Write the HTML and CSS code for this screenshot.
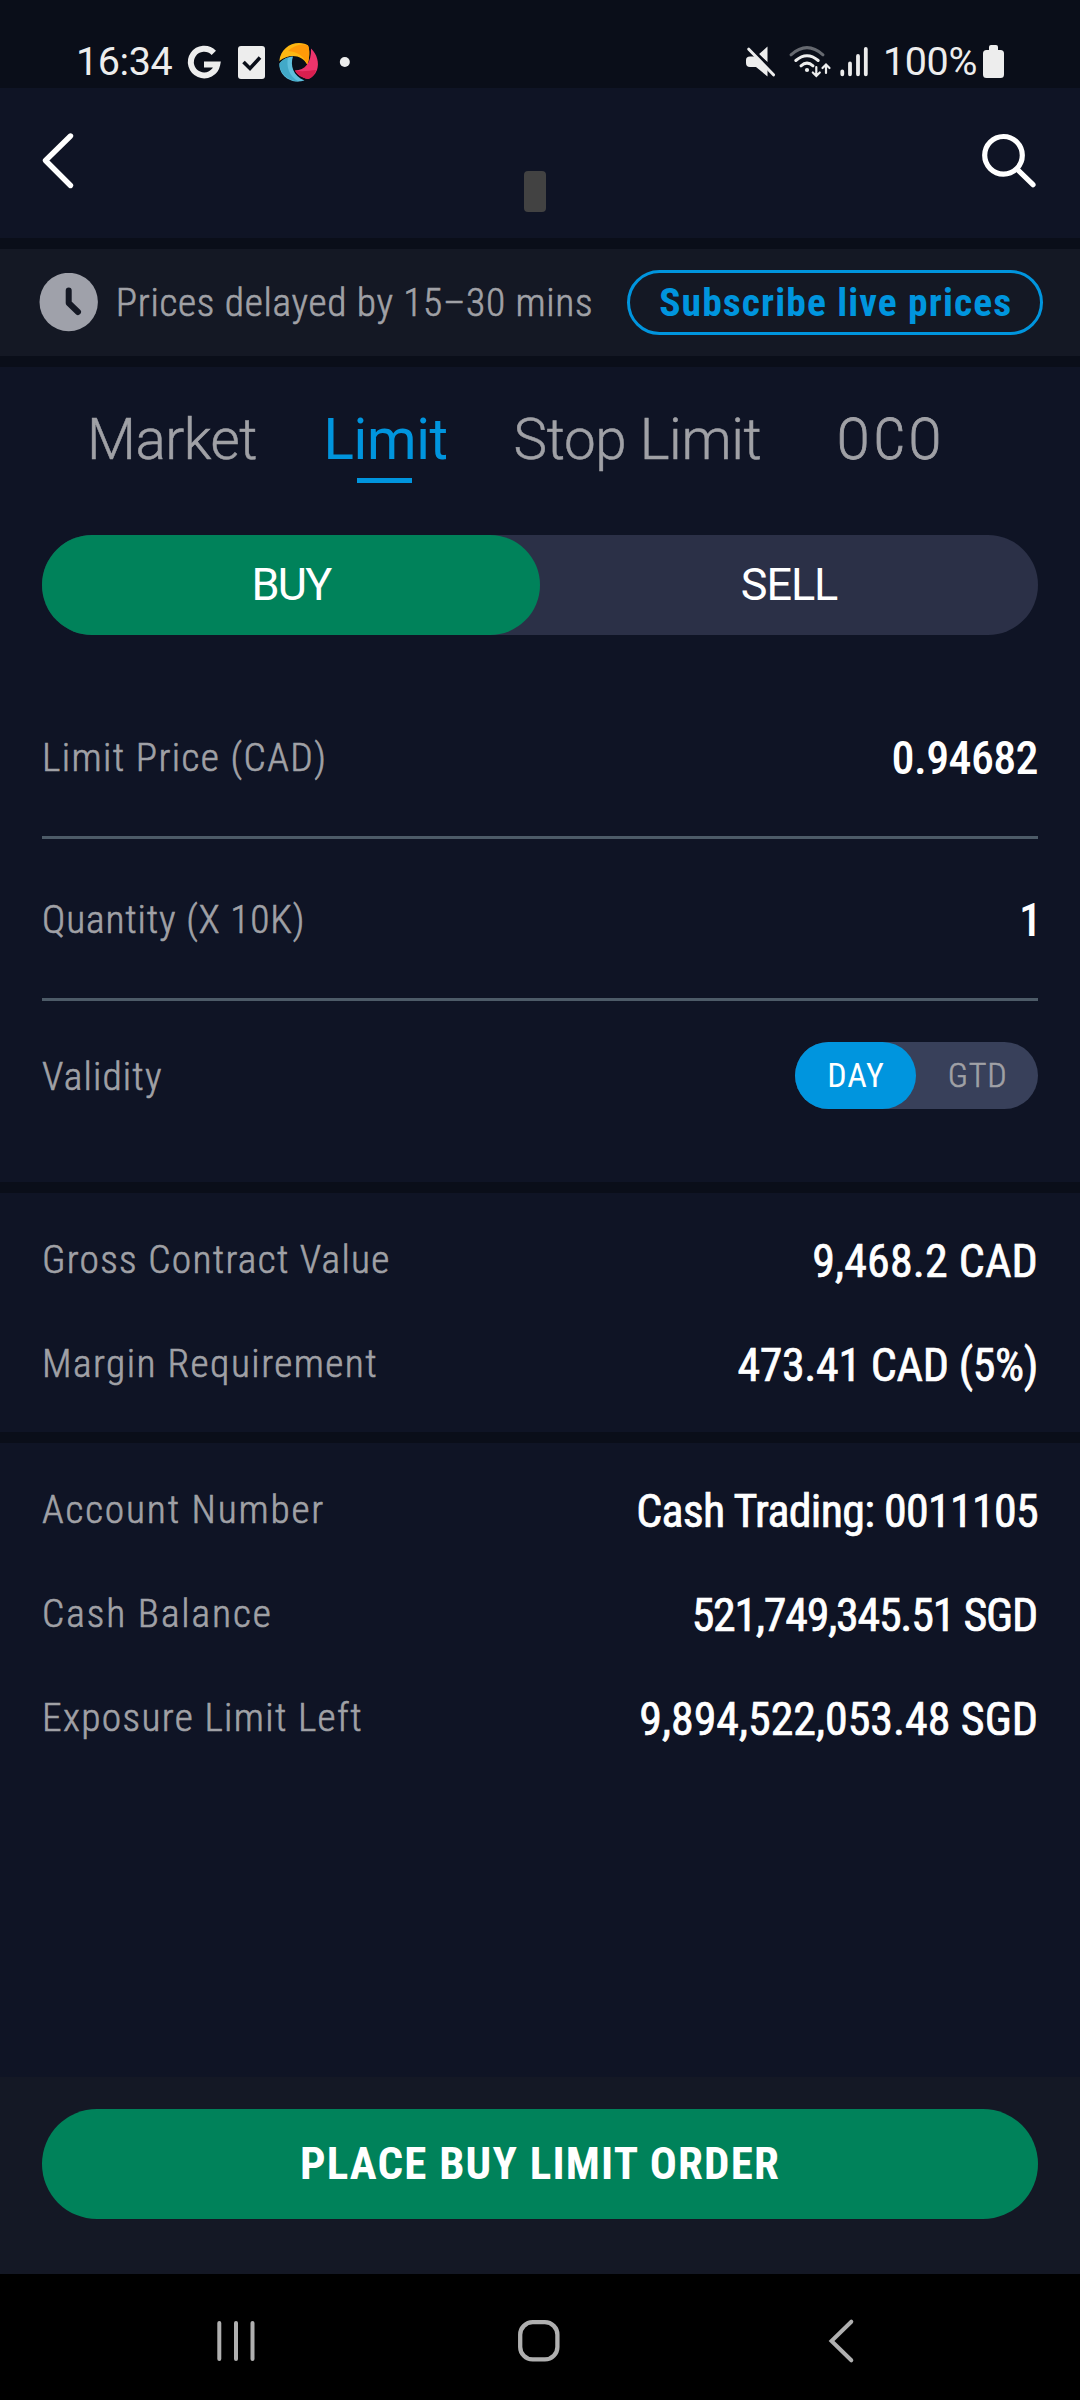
FILE: index.html
```html
<!DOCTYPE html>
<html lang="en">
<head>
<meta charset="utf-8">
<title>Place order</title>
<link rel="stylesheet" href="styles.css">
</head>
<body>
<div class="screen">
  <div class="status">
    <div class="status-left">
      <span class="time">16:34</span>
      <svg class="ic-g" viewBox="186 0 36 88"><path d="M213.8 52.9A13.3 13.3 0 1 0 217.2 64.6H204" fill="none" stroke="#ededed" stroke-width="6"/></svg>
      <svg class="ic-task" viewBox="236 0 32 88"><rect x="238" y="46" width="27" height="33" rx="3" fill="#ededed"/><path d="M243.5 62l6.5 6.5 10-11" fill="none" stroke="#0a0e19" stroke-width="3.6"/></svg>
      <svg class="ic-swirl" viewBox="277 0 44 88">
        <path d="M279.3 61C280.5 50 289 43 299 43C303 43 306.5 44 308 45.5C310 50 309.5 58 307.5 65C302 55 290 53 279.3 61Z" fill="#fdb813"/>
        <path d="M308 45.5C310 50 309.500 58 307.500 65C304 56 298 52 288 51C294 45 302 43 308 45.500Z" fill="#ff9a08"/>
        <path d="M293 56.500C290 65 293 76 304.500 80.500C291 85 278.500 75 279.500 63.500C282 60 287 57 293 56.500Z" fill="#5fbfdc"/>
        <path d="M288 57.500C286 66 289 77 299 81.500C287 81 279 72 279.500 63.500C282 60 285 58.500 288 57.500Z" fill="#42a9c8"/>
        <path d="M311 48.500C317 54 319.500 63 317 70C315 75 311.500 78 308 79C302 77.500 297 75 295 70.500C305 70 311.500 63 311 48.500Z" fill="#ee346c"/>
        <path d="M316 70C314.500 75 311.500 78 308 79C302 77.500 297 75 295 70.500C303 72 310 70.500 316 70Z" fill="#d91f4f"/>
      </svg>
      <svg class="ic-dot" viewBox="339 0 12 88"><circle cx="344.8" cy="62" r="5" fill="#ededed"/></svg>
    </div>
    <div class="status-right">
      <svg class="ic-mute" viewBox="744 0 34 88"><path d="M767.500 46.500V62L758.800 54.300ZM750 56.500H754.500L767.500 69.500V76.500L756 67H750Q746 67 746 63V60Q746 56.500 750 56.500Z" fill="#ededed"/><path d="M755 51.500L775 72" stroke="#0a0e19" stroke-width="2.500"/><path d="M748.800 49.200L773.500 74.800" stroke="#ededed" stroke-width="3" stroke-linecap="round"/></svg>
      <svg class="ic-wifi" viewBox="788 0 44 88" fill="none" stroke="#ededed" stroke-width="3" stroke-linecap="round"><path d="M791 54.800Q807 40.500 823 54.800" stroke="#666970"/><path d="M795.800 60.500Q807 51 818.200 60.500M801 65.800Q807 60.500 813 65.800"/><circle cx="807" cy="70" r="2.100" fill="#ededed" stroke="none"/><path d="M816.300 67V75.500M812.800 72.500L816.300 76L819.800 72.500M826 73V64.800M822.500 68L826 64.500L829.500 68" stroke-width="2.200"/></svg>
      <svg class="ic-signal" viewBox="838 0 32 88" stroke="#ededed" stroke-width="3.800" stroke-linecap="round"><path d="M842.300 71.500V74.300M850 63.500V74.300M858 56V74.300M865.800 49V74.300"/></svg>
      <span class="batt">100%</span>
      <svg class="ic-batt" viewBox="982 0 24 88"><path d="M989 50V47Q989 45 991 45H996Q998 45 998 47V50H1000.500Q1004 50 1004 53.500V74.500Q1004 78 1000.500 78H986.500Q983 78 983 74.500V53.500Q983 50 986.500 50Z" fill="#ededed"/></svg>
    </div>
  </div>

  <header class="header">
    <svg class="back" viewBox="40 88 36 150"><path d="M70.500 136L45.500 160.500L70.500 185.500" fill="none" stroke="#fff" stroke-width="5.400" stroke-linecap="round" stroke-linejoin="round"/></svg>
    <span class="title-chip"></span>
    <svg class="search" viewBox="980 88 60 150" fill="none" stroke="#fff" stroke-width="5.200" stroke-linecap="round"><circle cx="1003.500" cy="155.300" r="18.800"/><path d="M1017.500 169.500L1033 184.700"/></svg>
  </header>

  <section class="notice">
    <svg class="clock" viewBox="0 0 60 60"><circle cx="29.700" cy="29" r="29.200" fill="#9fa1aa"/><path d="M29.700 17.500V30L39 39" fill="none" stroke="#141824" stroke-width="6" stroke-linecap="round" stroke-linejoin="round"/></svg>
    <span class="notice-text">Prices delayed by 15–30 mins</span>
    <a class="subscribe">Subscribe live prices</a>
  </section>

  <section class="order">
    <nav class="tabs">
      <a class="tab market">Market</a>
      <a class="tab limit active">Limit</a>
      <a class="tab stop">Stop Limit</a>
      <a class="tab oco">OCO</a>
    </nav>
    <div class="side">
      <span class="side-option buy">BUY</span>
      <span class="side-option sell">SELL</span>
    </div>
    <div class="field first">
      <span class="label l-price">Limit Price (CAD)</span><span class="input price">0.94682</span>
    </div>
    <div class="field">
      <span class="label l-qty">Quantity (X 10K)</span><span class="input qty">1</span>
    </div>
    <div class="validity">
      <span class="label l-validity">Validity</span>
      <div class="toggle"><span class="toggle-option on">DAY</span><span class="toggle-option">GTD</span></div>
    </div>
  </section>

  <section class="summary contract">
    <div class="row"><span class="label l-gross">Gross Contract Value</span><span class="value v-gross">9,468.2 CAD</span></div>
    <div class="row"><span class="label l-margin">Margin Requirement</span><span class="value v-margin">473.41 CAD (5%)</span></div>
  </section>

  <section class="summary account">
    <div class="row"><span class="label l-account">Account Number</span><span class="value v-account">Cash Trading: 0011105</span></div>
    <div class="row"><span class="label l-cash">Cash Balance</span><span class="value v-cash">521,749,345.51 SGD</span></div>
    <div class="row"><span class="label l-exposure">Exposure Limit Left</span><span class="value v-exposure">9,894,522,053.48 SGD</span></div>
  </section>

  <footer class="footer"><div class="submit">PLACE BUY LIMIT ORDER</div></footer>

  <div class="navbar">
    <svg viewBox="200 2274 72 126" stroke="#b0b0b0" stroke-width="4" stroke-linecap="round"><path d="M219.300 2323V2359M236 2323V2359M252.500 2323V2359"/></svg>
    <svg viewBox="502.500 2274 72 126"><rect x="519.700" y="2322.200" width="37.200" height="37.200" rx="12.500" fill="none" stroke="#b0b0b0" stroke-width="4.300"/></svg>
    <svg viewBox="805 2274 72 126"><path d="M851.300 2321.700L831.500 2341L851.300 2360.300" fill="none" stroke="#b0b0b0" stroke-width="4" stroke-linecap="round"/></svg>
  </div>
</div>
</body>
</html>
```
FILE: styles.css
```css
* { box-sizing: border-box; }

body {
  margin: 0;
  background: #0a0e19;
  font-family: "Roboto Condensed", Roboto, sans-serif;
  color: #fff;
}

.screen {
  width: 1080px;
  height: 2400px;
  display: flex;
  flex-direction: column;
  white-space: nowrap;
  overflow: hidden;
}

svg { display: block; flex: none; }

/* Status bar */
.status {
  height: 88px;
  flex: none;
  display: flex;
  justify-content: space-between;
  padding: 0 74px 0 76px;
  font-family: Roboto, sans-serif;
  font-size: 39.5px;
  font-weight: 400;
  line-height: 123px;
  color: #ededed;
}
.status-left, .status-right { display: flex; height: 88px; }
.time { width: 110px; letter-spacing: -0.4px; }
.ic-g { width: 36px; height: 88px; margin-right: 14px; }
.ic-task { width: 32px; height: 88px; margin-right: 9px; }
.ic-swirl { width: 44px; height: 88px; margin-right: 18px; }
.ic-dot { width: 12px; height: 88px; }
.ic-mute { width: 34px; height: 88px; margin-right: 10px; }
.ic-wifi { width: 44px; height: 88px; margin-right: 6px; }
.ic-signal { width: 32px; height: 88px; margin-right: 13px; }
.batt { width: 99px; letter-spacing: -0.4px; }
.ic-batt { width: 24px; height: 88px; }

/* Header */
.header {
  height: 150px;
  flex: none;
  display: flex;
  justify-content: space-between;
  padding: 0 40px;
  background: #0f1425;
}
.back { width: 36px; height: 150px; }
.search { width: 60px; height: 150px; }
.title-chip {
  width: 22px;
  height: 41px;
  margin: 83px 0 0 14px;
  border-radius: 4px;
  background: #424242;
}

/* Delayed price notice */
.notice {
  height: 107px;
  flex: none;
  margin-top: 11px;
  display: flex;
  align-items: center;
  padding: 0 37px 0 39px;
  background: #141824;
}
.clock { width: 60px; height: 60px; }
.notice-text {
  margin-left: 16.8px;
  font-size: 39.5px;
  font-weight: 300;
  letter-spacing: 0.68px;
  color: #a0a1a6;
  -webkit-text-stroke: 0.6px #a0a1a6;
}
.subscribe {
  width: 416px;
  height: 65px;
  margin-left: auto;
  border: 3px solid #0095de;
  border-radius: 33px;
  text-align: center;
  font-size: 39.5px;
  font-weight: 700;
  line-height: 60px;
  letter-spacing: 1.1px;
  text-indent: 1.5px;
  color: #0095de;
}

/* Order form */
.order {
  height: 815px;
  flex: none;
  margin-top: 11px;
  padding: 35px 42px 0;
  background: #0f1425;
}
.tabs {
  display: grid;
  grid-template-columns: 236.5px 190px 323px auto;
  height: 81px;
  padding-left: 45px;
}
.tab {
  font-family: Roboto, sans-serif;
  font-size: 56.5px;
  font-weight: 300;
  line-height: 76px;
  color: #a0a1a6;
  -webkit-text-stroke: 0.5px #a0a1a6;
}
.market { letter-spacing: -0.45px; }
.limit { letter-spacing: -0.35px; }
.stop { letter-spacing: -0.35px; }
.oco {
  font-family: "Roboto Condensed", Roboto, sans-serif;
  letter-spacing: 3.3px;
  -webkit-text-stroke: 0.8px #a0a1a6;
}
.active { font-weight: 400; color: #0095de; -webkit-text-stroke: 0; }
.active::after {
  content: "";
  display: block;
  width: 55px;
  height: 5px;
  margin-left: 33.5px;
  background: #0095de;
}

.side {
  display: grid;
  grid-template-columns: 1fr 1fr;
  height: 100px;
  margin-top: 52px;
  border-radius: 50px;
  background: #2b3047;
}
.side-option {
  border-radius: 50px;
  text-align: center;
  font-family: Roboto, sans-serif;
  font-size: 45px;
  line-height: 100px;
}
.buy { background: #00825a; letter-spacing: -1.8px; }
.sell { letter-spacing: -1.1px; }

.label {
  font-size: 39.5px;
  font-weight: 300;
  color: #a0a1a6;
  -webkit-text-stroke: 0.6px #a0a1a6;
}
.l-price { letter-spacing: 1.38px; }
.l-qty { letter-spacing: 0.83px; }
.l-validity { letter-spacing: 1.15px; }
.l-gross { letter-spacing: 1.26px; }
.l-margin { letter-spacing: 1.45px; }
.l-account { letter-spacing: 1.78px; }
.l-cash { letter-spacing: 1.87px; }
.l-exposure { letter-spacing: 1.33px; }

.field {
  display: flex;
  align-items: center;
  justify-content: space-between;
  height: 162px;
  padding-top: 2px;
  border-bottom: 3px solid #4d5b68;
}
.first { margin-top: 42px; }
.input { font-size: 46px; font-weight: 500; }
.price { letter-spacing: -0.63px; }
.qty { margin-right: -4px; }

.validity {
  display: flex;
  align-items: center;
  justify-content: space-between;
  height: 67px;
  margin-top: 41px;
}
.l-validity { padding-top: 2px; }
.toggle {
  display: grid;
  grid-template-columns: 121px 122px;
  border-radius: 34px;
  background: #38405a;
}
.toggle-option {
  border-radius: 34px;
  text-align: center;
  font-size: 34px;
  line-height: 67px;
  letter-spacing: 0.8px;
  color: #a0a1a6;
  text-indent: 1px;
}
.toggle-option:not(.on) { font-weight: 300; -webkit-text-stroke: 0.6px #a0a1a6; }
.toggle .on { background: #0095de; color: #fff; }

/* Contract and account details */
.summary {
  flex: none;
  margin-top: 11px;
  padding: 14.5px 42px 0;
  background: #0f1425;
}
.contract { height: 239px; }
.account { height: 634px; }
.row {
  display: flex;
  align-items: center;
  justify-content: space-between;
  height: 104px;
}
.value {
  padding-top: 3px;
  font-size: 46px;
  font-weight: 400;
  -webkit-text-stroke: 0.7px #fff;
}
.v-gross { letter-spacing: 0.15px; }
.v-margin { letter-spacing: -0.4px; }
.v-account { letter-spacing: -0.72px; }
.v-cash { letter-spacing: -1.25px; margin-right: 1px; }
.v-exposure { letter-spacing: -0.05px; }

/* Submit */
.footer {
  height: 197px;
  flex: none;
  padding: 32px 42px 0;
  background: #141825;
}
.submit {
  height: 110px;
  border-radius: 55px;
  background: #00825a;
  text-align: center;
  font-size: 45px;
  font-weight: 700;
  line-height: 110px;
  letter-spacing: 1.2px;
}

/* System navigation */
.navbar {
  height: 126px;
  flex: none;
  display: flex;
  justify-content: space-between;
  padding: 0 203px 0 200px;
  background: #000;
}
.navbar svg { width: 72px; height: 126px; }
```
